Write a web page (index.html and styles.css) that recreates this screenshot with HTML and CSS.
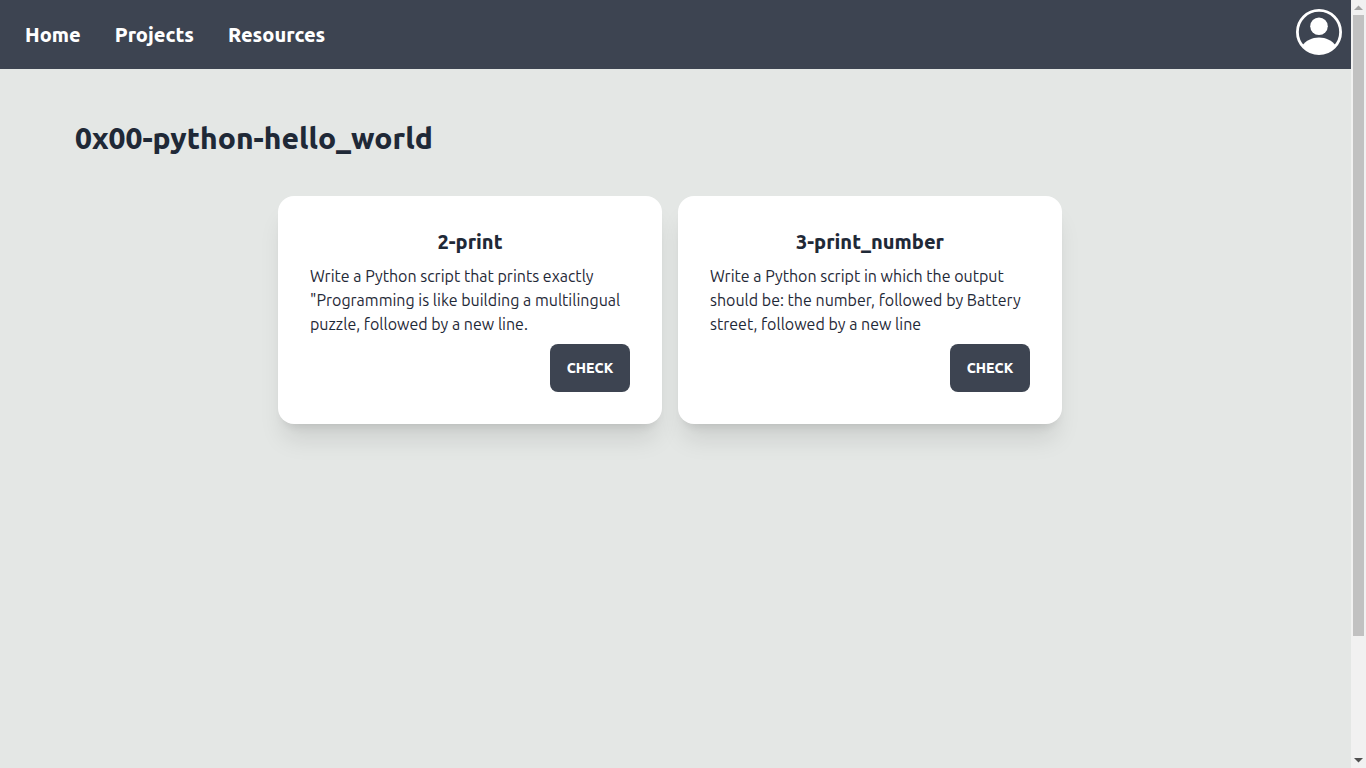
FILE: index.html
```html
<!DOCTYPE html>
<html lang="en">
<head>
<meta charset="utf-8">
<meta name="viewport" content="width=device-width, initial-scale=1">
<title>0x00-python-hello_world</title>
<link rel="stylesheet" href="styles.css">
</head>
<body>
<div class="shell">
  <div class="page">
    <header class="navbar">
      <nav class="nav-links">
        <a href="#home">Home</a>
        <a href="#projects">Projects</a>
        <a href="#resources">Resources</a>
      </nav>
      <button class="avatar" type="button" aria-label="Profile">
        <svg viewBox="0 0 46 46" width="46" height="46" aria-hidden="true">
          <defs><clipPath id="ring"><circle cx="23" cy="23" r="22"/></clipPath></defs>
          <circle cx="23" cy="23" r="21.6" fill="none" stroke="#fff" stroke-width="2.8"/>
          <circle cx="23" cy="17.3" r="8.8" fill="#fff"/>
          <path clip-path="url(#ring)" d="M6 37C10 31.500 16 28.600 23 28.600S36 31.500 40 37V46H6Z" fill="#fff"/>
        </svg>
      </button>
    </header>
    <main class="content">
      <h1>0x00-python-hello_world</h1>
      <div class="cards">
        <article class="card">
          <h2>2-print</h2>
          <p>Write a Python script that prints exactly "Programming is like building a multilingual puzzle, followed by a new line.</p>
          <div class="actions"><button class="btn" type="button">CHECK</button></div>
        </article>
        <article class="card">
          <h2>3-print_number</h2>
          <p>Write a Python script in which the output should be: the number, followed by Battery street, followed by a new line</p>
          <div class="actions"><button class="btn" type="button">CHECK</button></div>
        </article>
      </div>
    </main>
  </div>
  <div class="scrollbar" aria-hidden="true">
    <svg class="arrow" viewBox="0 0 15 14" width="15" height="14"><path d="M3 10L7.500 5.500L12 10Z" fill="#a3a3a3"/></svg>
    <div class="track"><div class="thumb"></div></div>
    <svg class="arrow" viewBox="0 0 15 14" width="15" height="14"><path d="M3 4L7.500 8.500L12 4Z" fill="#505050"/></svg>
  </div>
</div>
</body>
</html>
```
FILE: styles.css
```css
* { box-sizing: border-box; }

body {
  margin: 0;
  font-family: Ubuntu, "Noto Sans", sans-serif;
  font-size: 16px;
  font-weight: 400;
  line-height: 24px;
  color: #1f2937;
  background: #e4e7e5;
}

h1, h2, p { margin: 0; }

.shell {
  display: flex;
  height: 100vh;
}

.page {
  flex: 1;
  min-width: 0;
  overflow-y: auto;
  scrollbar-width: none;
}

.navbar {
  display: flex;
  align-items: flex-start;
  justify-content: space-between;
  padding: 9px 9px 14px 25px;
  background: #3d4451;
}

.nav-links {
  display: flex;
  gap: 34px;
  padding-top: 12px;
}

.nav-links a {
  color: #fff;
  font-size: 20px;
  line-height: 28px;
  font-weight: 800;
  text-decoration: none;
}

.avatar {
  display: flex;
  padding: 0;
  border: 0;
  background: none;
  cursor: pointer;
}

.content {
  min-height: 840px;
  padding: 51px 86px 0 75px;
}

h1 {
  font-size: 30px;
  line-height: 36px;
  font-weight: 800;
}

.cards {
  display: flex;
  flex-wrap: wrap;
  justify-content: center;
  gap: 16px;
  margin-top: 40px;
}

.card {
  display: flex;
  flex-direction: column;
  gap: 8px;
  width: 384px;
  padding: 32px;
  border-radius: 16px;
  background: #fff;
  box-shadow: 0 20px 25px -5px rgba(0, 0, 0, 0.1), 0 8px 10px -6px rgba(0, 0, 0, 0.1);
}

.card h2 {
  font-size: 20px;
  line-height: 28px;
  font-weight: 800;
  text-align: center;
}

.actions {
  display: flex;
  justify-content: flex-end;
}

.btn {
  min-width: 80px;
  height: 48px;
  padding: 0 16px;
  border: 0;
  border-radius: 8px;
  background: #3d4451;
  color: #fff;
  font: inherit;
  font-size: 14px;
  font-weight: 800;
  cursor: pointer;
}

.scrollbar {
  display: flex;
  flex-direction: column;
  width: 15px;
  background: #f1f1f1;
}

.arrow { display: block; }

.track {
  flex: 1;
  padding: 1px 2px 0;
}

.thumb {
  height: 84%;
  background: #c1c1c1;
}
```
